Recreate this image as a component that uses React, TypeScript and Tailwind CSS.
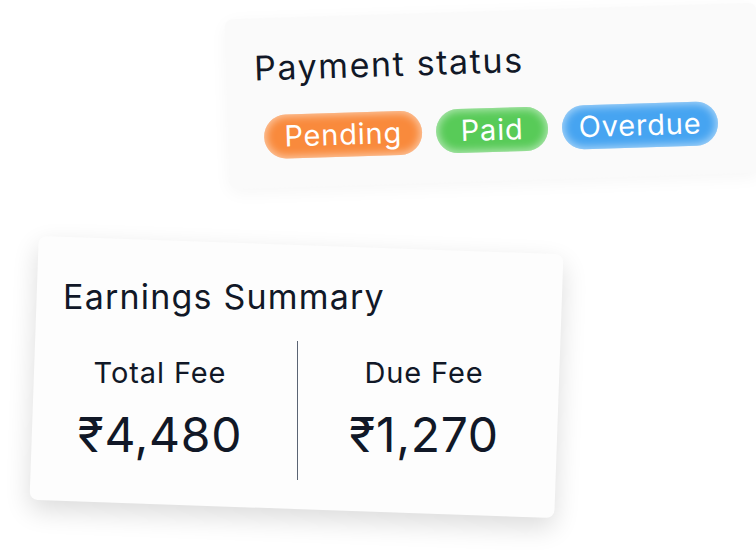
const pills = [
  { label: "Pending", cls: "w-[158px] bg-[#f98a3c]" },
  { label: "Paid", cls: "w-[112px] bg-[#58cb58]" },
  { label: "Overdue", cls: "w-[156px] bg-[#46a4f1]" },
];

const PaymentStatusCard = () => (
  <div className="absolute left-[227px] top-[11px] h-[170px] w-[532px] rotate-[-1.8deg] rounded-lg bg-[#fafafa] pl-[28px] pt-[30px] shadow-[0_4px_18px_rgba(0,0,0,0.04)]">
    <h2 className="text-[34px] leading-[40px] tracking-[1.6px] text-[#111827]">Payment status</h2>
    <div className="mt-[27px] flex gap-[14px] pl-[8px]">
      {pills.map((p) => (
        <span
          key={p.label}
          className={`flex h-[44px] items-center justify-center rounded-full text-[29px] tracking-[0.8px] text-white shadow-[inset_0_0_9px_2px_rgba(255,255,255,0.55)] ${p.cls}`}
        >
          {p.label}
        </span>
      ))}
    </div>
  </div>
);

const FeeColumn = ({ label, value }: { label: string; value: string }) => (
  <div className="flex w-[194px] flex-col items-center pt-[15px]">
    <span className="text-[29px] leading-[34px] tracking-[0.9px]">{label}</span>
    <span className="mt-[17px] text-[48px] leading-[56px] tracking-[0.7px]">{value}</span>
  </div>
);

const EarningsCard = () => (
  <div className="absolute left-[34px] top-[245px] h-[264px] w-[525px] pl-[29px] pt-[32px] text-[#111827]">
    {/* tilted card background, content stays level */}
    <div className="absolute inset-0 rotate-[2deg] rounded-lg bg-[#fdfdfd] shadow-[0_10px_26px_rgba(0,0,0,0.14)]" />
    <div className="relative">
      <h2 className="text-[34px] leading-[40px] tracking-[1.2px]">Earnings Summary</h2>
      <div className="mt-[24px] flex">
        <FeeColumn label="Total Fee" value="₹4,480" />
        <div className="ml-[40px] h-[139px] w-px bg-[#5b6474]" />
        <div className="ml-[29px]">
          <FeeColumn label="Due Fee" value="₹1,270" />
        </div>
      </div>
    </div>
  </div>
);

export default function App() {
  return (
    <div className="relative h-[557px] w-[756px] overflow-hidden bg-white font-['Inter','Noto_Sans',sans-serif]">
      <PaymentStatusCard />
      <EarningsCard />
    </div>
  );
}
